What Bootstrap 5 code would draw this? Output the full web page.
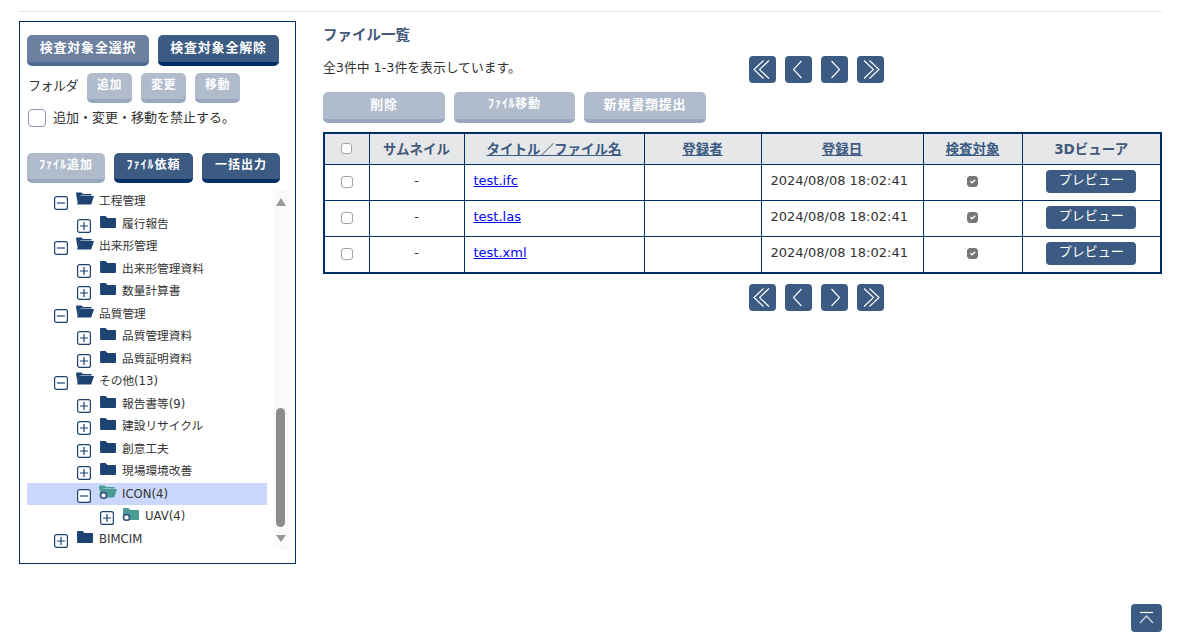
<!DOCTYPE html>
<html lang="ja">
<head>
<meta charset="utf-8">
<title>ファイル一覧</title>
<link href="https://cdn.jsdelivr.net/npm/bootstrap@5.3.0/dist/css/bootstrap.min.css" rel="stylesheet">
<style>
html,body{height:633px;overflow:hidden;}
body{font-family:"DejaVu Sans","Noto Sans CJK JP",sans-serif;font-size:13px;color:#333;background:#fff;}
.page-wrap{height:633px;padding:0 19px 1px;}
.top-rule{height:12px;border-bottom:1px solid #e5e5e5;margin-bottom:9px;flex:none;}
.side-panel{width:277px;height:543px;border:1px solid #002e66;padding:13px 0 0 7px;flex:none;}
.main-area{margin-left:27px;flex:1;min-width:0;}
.gap-nine{column-gap:9px;}
.act{font-weight:700;color:#fff;border:0;border-bottom:4px solid;border-radius:5px;padding:0 0 2px;line-height:1.2;letter-spacing:.8px;font-size:13px;display:flex;align-items:center;justify-content:center;}
.act:hover,.act:disabled{color:#fff;}
.act:disabled{opacity:1;}
.act-dark,.act-dark:hover{background:#3b5b83;border-color:#002e66;}
.act-mid,.act-mid:hover{background:#6c80a0;border-color:#4f6c93;}
.act-pale,.act-pale:disabled{background:#b0bbcc;border-color:#9aa8bf;}
.act-small{font-size:12px;}
.w-122{width:122px;height:31px;}
.w-121{width:121px;height:31px;}
.w-45{width:45px;height:30px;font-size:12px;letter-spacing:.4px;}
.w-78{width:78px;height:30px;font-size:12px;letter-spacing:1px;}
.w-79{width:79px;height:30px;font-size:12px;letter-spacing:1px;}
.folder-row{margin-top:7px;}
.folder-label{font-size:13px;width:50px;margin:0 0 4px 1px;white-space:nowrap;letter-spacing:-.5px;}
.lock-row{font-size:13px;height:18px;margin:6px 0 26px;line-height:18px;}
.lock-row .form-check-input{width:18px;height:18px;margin:0 7px 0 1px;border-color:#8d92b8;border-radius:4px;flex:none;}
.tree-shell{height:360px;margin-top:7px;}
.tree-list{width:240px;list-style:none;padding:0;margin:0;}
.tree-row{height:22.5px;display:flex;align-items:flex-start;font-size:11.7px;line-height:22px;white-space:nowrap;color:#333;}
.tree-row.on{background:#cbd8fd;}
.lv1{padding-left:27px;}
.lv2{padding-left:50px;}
.lv3{padding-left:73px;}
.tog{width:14px;height:14px;margin-top:6px;flex:none;display:block;}
.fld{width:18px;height:14px;margin:2px 5px 0 8px;flex:none;display:block;}
.fake-bar{width:15px;margin-left:6px;background:#fafafa;padding:8px 0;}
.bar-thumb{width:9px;height:119px;margin:auto 0 8px 3px;background:#8c8c8c;border-radius:5px;}
.arrow-up{width:0;height:0;border:5px solid transparent;border-top:0;border-bottom:8px solid #999;margin-left:3px;}
.arrow-down{width:0;height:0;border:5px solid transparent;border-bottom:0;border-top:7px solid #999;margin-left:3px;}
.list-title{font-size:14.5px;font-weight:700;color:#44597a;line-height:20px;margin:4px 0 0;}
.pager-row{height:27px;margin-top:11px;}
.count-text{width:426px;line-height:24px;font-size:12.8px;}
.pg{width:27px;height:27px;padding:0;background:#3b5b83;border:0;border-radius:4px;display:block;}
.pg:hover{background:#3b5b83;}
.pg svg{display:block;}
.act-row{margin:9px 0;}
.files{table-layout:fixed;width:837px;border:2px solid #002e66;border-collapse:collapse;margin:0;--bs-table-border-color:#002e66;}
.c-a{width:45px;}.c-b{width:95px;}.c-c{width:180px;}.c-d{width:117px;}.c-e{width:162px;}.c-f{width:99px;}.c-g{width:139px;}
.files>:not(caption)>*>*{border:1px solid #002e66;padding:0;text-align:center;vertical-align:middle;color:#333;box-shadow:none;}
.files>thead>tr>th{height:31px;background:#e6e7e9;font-size:13.5px;font-weight:700;line-height:18px;color:#44597a;}
.files th a{color:#3b5b83;}
.files td{height:36px;line-height:18px;padding-bottom:3px;}
.files tbody tr:last-child td{height:37px;}
.files>tbody>tr>td.tl{text-align:left;padding-left:9px;}
.files td a{color:#00f;}
.files .form-check-input{display:block;margin:3px auto 0;width:12px;height:12px;border-color:#a3a3a3;border-radius:3px;background-color:#fff;}
.files th .form-check-input{width:11px;height:11px;margin-top:0;}
.files .form-check-input:disabled{opacity:1;width:11px;height:11px;margin-top:2px;background-color:#777;border-color:#777;}
.pv{width:90px;height:23px;padding:0 0 3px;background:#3b5b83;color:#fff;border:0;border-radius:4px;font-size:13px;line-height:18px;display:block;margin:2px auto 0;}
.pv:hover{background:#3b5b83;color:#fff;}
.pager-low{margin:10px 0 0 426px;}
.to-top{width:31px;height:28px;padding:0;background:#3b5b83;border:0;border-radius:4px;}
.to-top:hover{background:#3b5b83;}
</style>
</head>
<body>
<svg width="0" height="0" class="d-block" aria-hidden="true">
  <defs>
    <g id="t-minus"><rect x=".6" y=".6" width="12.8" height="12.800" rx="2" fill="#fff" stroke="#1d4373" stroke-width="1.2"/><path d="M3 7h8" stroke="#1d4373" stroke-width="1.2"/></g>
    <g id="t-plus"><rect x=".6" y=".6" width="12.8" height="12.800" rx="2" fill="#fff" stroke="#1d4373" stroke-width="1.2"/><path d="M3 7h8M7 3v8" stroke="#1d4373" stroke-width="1.2"/></g>
    <path id="f-closed" d="M1 2a1 1 0 0 1 1-1h4.500l2 2h7.500a1 1 0 0 1 1 1v8a1 1 0 0 1-1 1h-14a1 1 0 0 1-.9-1z" fill="#1d4373"/>
    <g id="f-open"><path d="M0 1.500a1 1 0 0 1 1-1h4.500l1.500 1.500h8.500v1.500h-11l-3 7z" fill="#1d4373"/><path d="M3.800 4h14.200l-2.800 8.500h-14.200z" fill="#1d4373"/></g>
    <g id="f-teal-open"><path d="M0 1.500a1 1 0 0 1 1-1h4.500l1.500 1.500h8.500v1.500h-11l-3 7z" fill="#4a9c94"/><path d="M3.800 4h14.200l-2.800 8.500h-14.200z" fill="#4a9c94"/><circle cx="4.500" cy="10.500" r="3" fill="#fff" stroke="#3b5b83" stroke-width="1.800"/></g>
    <g id="f-teal"><path d="M1 2a1 1 0 0 1 1-1h4.500l2 2h7.500a1 1 0 0 1 1 1v8a1 1 0 0 1-1 1h-14a1 1 0 0 1-.9-1z" fill="#4a9c94"/><circle cx="4.500" cy="10.500" r="3" fill="#fff" stroke="#3b5b83" stroke-width="1.800"/></g>
    <g id="p-first" fill="none" stroke="#fff" stroke-width="1.100"><path d="M14.500 4.500l-9.500 9 9.500 9"/><path d="M20 4.500l-9.500 9 9.500 9"/></g>
    <g id="p-prev" fill="none" stroke="#fff" stroke-width="1.100"><path d="M16.500 5l-8 8.500 8 8.500"/></g>
    <g id="p-next" fill="none" stroke="#fff" stroke-width="1.100"><path d="M10.500 5l8 8.500-8 8.500"/></g>
    <g id="p-last" fill="none" stroke="#fff" stroke-width="1.100"><path d="M7 4.500l9.500 9-9.500 9"/><path d="M12.500 4.500l9.500 9-9.500 9"/></g>
  </defs>
</svg>
<div class="page-wrap d-flex flex-column">
  <div class="top-rule"></div>
  <div class="d-flex">
    <aside class="side-panel">
      <div class="d-flex gap-nine">
        <button type="button" class="btn act act-mid w-122">検査対象全選択</button>
        <button type="button" class="btn act act-dark w-121">検査対象全解除</button>
      </div>
      <div class="d-flex align-items-center gap-nine folder-row">
        <span class="folder-label">フォルダ</span>
        <button type="button" class="btn act act-pale w-45" disabled>追加</button>
        <button type="button" class="btn act act-pale w-45" disabled>変更</button>
        <button type="button" class="btn act act-pale w-45" disabled>移動</button>
      </div>
      <label class="lock-row d-flex align-items-center">
        <input type="checkbox" class="form-check-input mt-0"><span>追加・変更・移動を禁止する。</span>
      </label>
      <div class="d-flex gap-nine">
        <button type="button" class="btn act act-pale w-78" disabled>ﾌｧｲﾙ追加</button>
        <button type="button" class="btn act act-dark w-79">ﾌｧｲﾙ依頼</button>
        <button type="button" class="btn act act-dark w-78">一括出力</button>
      </div>
      <div class="tree-shell d-flex">
        <ul class="tree-list">
          <li class="tree-row lv1"><svg class="tog"><use href="#t-minus"/></svg><svg class="fld"><use href="#f-open"/></svg>工程管理</li>
          <li class="tree-row lv2"><svg class="tog"><use href="#t-plus"/></svg><svg class="fld"><use href="#f-closed"/></svg>履行報告</li>
          <li class="tree-row lv1"><svg class="tog"><use href="#t-minus"/></svg><svg class="fld"><use href="#f-open"/></svg>出来形管理</li>
          <li class="tree-row lv2"><svg class="tog"><use href="#t-plus"/></svg><svg class="fld"><use href="#f-closed"/></svg>出来形管理資料</li>
          <li class="tree-row lv2"><svg class="tog"><use href="#t-plus"/></svg><svg class="fld"><use href="#f-closed"/></svg>数量計算書</li>
          <li class="tree-row lv1"><svg class="tog"><use href="#t-minus"/></svg><svg class="fld"><use href="#f-open"/></svg>品質管理</li>
          <li class="tree-row lv2"><svg class="tog"><use href="#t-plus"/></svg><svg class="fld"><use href="#f-closed"/></svg>品質管理資料</li>
          <li class="tree-row lv2"><svg class="tog"><use href="#t-plus"/></svg><svg class="fld"><use href="#f-closed"/></svg>品質証明資料</li>
          <li class="tree-row lv1"><svg class="tog"><use href="#t-minus"/></svg><svg class="fld"><use href="#f-open"/></svg>その他(13)</li>
          <li class="tree-row lv2"><svg class="tog"><use href="#t-plus"/></svg><svg class="fld"><use href="#f-closed"/></svg>報告書等(9)</li>
          <li class="tree-row lv2"><svg class="tog"><use href="#t-plus"/></svg><svg class="fld"><use href="#f-closed"/></svg>建設リサイクル</li>
          <li class="tree-row lv2"><svg class="tog"><use href="#t-plus"/></svg><svg class="fld"><use href="#f-closed"/></svg>創意工夫</li>
          <li class="tree-row lv2"><svg class="tog"><use href="#t-plus"/></svg><svg class="fld"><use href="#f-closed"/></svg>現場環境改善</li>
          <li class="tree-row lv2 on"><svg class="tog"><use href="#t-minus"/></svg><svg class="fld"><use href="#f-teal-open"/></svg>ICON(4)</li>
          <li class="tree-row lv3"><svg class="tog"><use href="#t-plus"/></svg><svg class="fld"><use href="#f-teal"/></svg>UAV(4)</li>
          <li class="tree-row lv1"><svg class="tog"><use href="#t-plus"/></svg><svg class="fld"><use href="#f-closed"/></svg>BIMCIM</li>
        </ul>
        <div class="fake-bar d-flex flex-column">
          <div class="arrow-up"></div>
          <div class="bar-thumb"></div>
          <div class="arrow-down"></div>
        </div>
      </div>
    </aside>
    <main class="main-area">
      <h2 class="list-title">ファイル一覧</h2>
      <div class="pager-row d-flex">
        <div class="count-text">全3件中 1-3件を表示しています。</div>
        <div class="d-flex gap-nine">
          <button type="button" class="btn pg" aria-label="最初"><svg width="27" height="27"><use href="#p-first"/></svg></button>
          <button type="button" class="btn pg" aria-label="前"><svg width="27" height="27"><use href="#p-prev"/></svg></button>
          <button type="button" class="btn pg" aria-label="次"><svg width="27" height="27"><use href="#p-next"/></svg></button>
          <button type="button" class="btn pg" aria-label="最後"><svg width="27" height="27"><use href="#p-last"/></svg></button>
        </div>
      </div>
      <div class="act-row d-flex gap-nine">
        <button type="button" class="btn act act-pale w-122" disabled>削除</button>
        <button type="button" class="btn act act-pale act-small w-121" disabled>ﾌｧｲﾙ移動</button>
        <button type="button" class="btn act act-pale w-122" disabled>新規書類提出</button>
      </div>
      <table class="table files">
        <colgroup><col class="c-a"><col class="c-b"><col class="c-c"><col class="c-d"><col class="c-e"><col class="c-f"><col class="c-g"></colgroup>
        <thead>
          <tr>
            <th><input type="checkbox" class="form-check-input" aria-label="全選択"></th>
            <th>サムネイル</th>
            <th><a href="#">タイトル／ファイル名</a></th>
            <th><a href="#">登録者</a></th>
            <th><a href="#">登録日</a></th>
            <th><a href="#">検査対象</a></th>
            <th>3Dビューア</th>
          </tr>
        </thead>
        <tbody>
          <tr>
            <td><input type="checkbox" class="form-check-input" aria-label="選択"></td><td>-</td><td class="tl"><a href="#">test.ifc</a></td><td></td><td class="tl">2024/08/08 18:02:41</td>
            <td><input type="checkbox" class="form-check-input" checked disabled aria-label="検査対象"></td><td><button type="button" class="btn pv">プレビュー</button></td>
          </tr>
          <tr>
            <td><input type="checkbox" class="form-check-input" aria-label="選択"></td><td>-</td><td class="tl"><a href="#">test.las</a></td><td></td><td class="tl">2024/08/08 18:02:41</td>
            <td><input type="checkbox" class="form-check-input" checked disabled aria-label="検査対象"></td><td><button type="button" class="btn pv">プレビュー</button></td>
          </tr>
          <tr>
            <td><input type="checkbox" class="form-check-input" aria-label="選択"></td><td>-</td><td class="tl"><a href="#">test.xml</a></td><td></td><td class="tl">2024/08/08 18:02:41</td>
            <td><input type="checkbox" class="form-check-input" checked disabled aria-label="検査対象"></td><td><button type="button" class="btn pv">プレビュー</button></td>
          </tr>
        </tbody>
      </table>
      <div class="pager-low d-flex gap-nine">
        <button type="button" class="btn pg" aria-label="最初"><svg width="27" height="27"><use href="#p-first"/></svg></button>
        <button type="button" class="btn pg" aria-label="前"><svg width="27" height="27"><use href="#p-prev"/></svg></button>
        <button type="button" class="btn pg" aria-label="次"><svg width="27" height="27"><use href="#p-next"/></svg></button>
        <button type="button" class="btn pg" aria-label="最後"><svg width="27" height="27"><use href="#p-last"/></svg></button>
      </div>
    </main>
  </div>
  <div class="mt-auto d-flex justify-content-end">
    <button type="button" class="btn to-top" aria-label="ページ先頭へ">
      <svg width="31" height="28" class="d-block"><path d="M9 8.500h13" stroke="#fff" stroke-width="1.200"/><path d="M9 19l6.500-7 6.500 7" fill="none" stroke="#d5dce6" stroke-width="1.200"/></svg>
    </button>
  </div>
</div>
</body>
</html>
